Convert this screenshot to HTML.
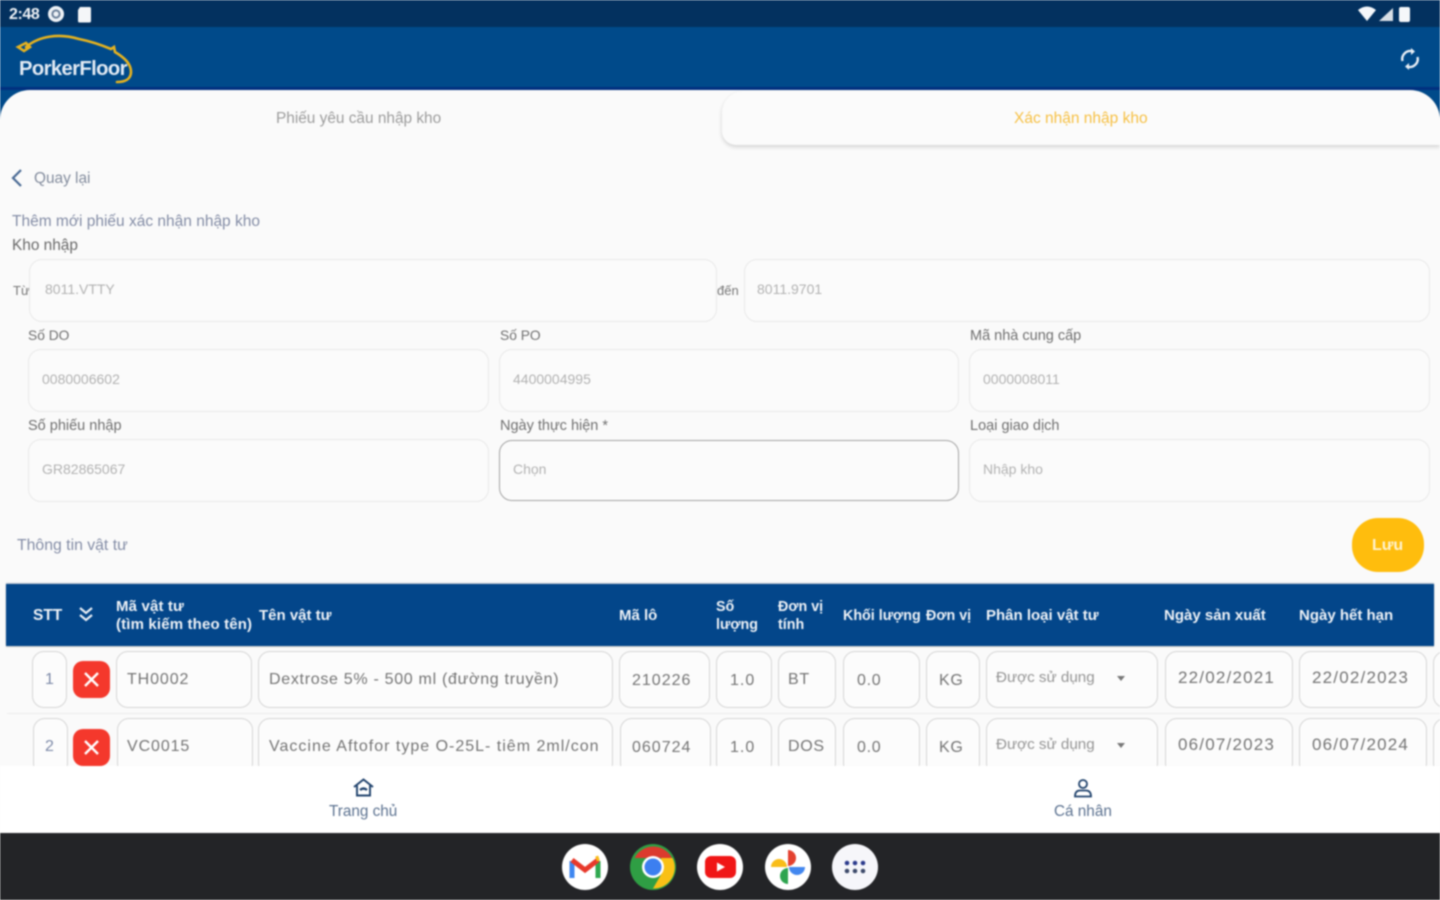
<!DOCTYPE html>
<html lang="vi"><head><meta charset="utf-8"><title>PorkerFloor</title>
<style>
*{box-sizing:border-box;margin:0;padding:0}
html,body{width:1440px;height:900px;overflow:hidden;background:#fafafa}
body{font-family:"Liberation Sans",sans-serif;position:relative}
#r{position:absolute;left:0;top:0;width:1440px;height:900px;overflow:hidden;filter:blur(.7px)}
.a{position:absolute;white-space:nowrap}
.t{position:absolute;white-space:nowrap;line-height:1}
.box{position:absolute;border:1.5px solid #e9e9e9;border-radius:13px;background:#fbfbfb}
.cell{position:absolute;border:1.5px solid #d6d6d6;border-radius:12px;background:#fcfcfc;height:57px;color:#747474;font-size:16px;letter-spacing:.7px;line-height:55px;white-space:nowrap;overflow:hidden}
.dt{font-size:17px;letter-spacing:1.2px;line-height:51px}
.lb{position:absolute;white-space:nowrap;font-size:14.5px;color:#707070;line-height:1}
.ph{position:absolute;white-space:nowrap;font-size:14px;color:#b2b2b2;line-height:1}
.th{position:absolute;white-space:nowrap;color:#eef2f7;font-size:15px;font-weight:bold;line-height:18px}
.x{position:absolute;left:73px;width:37px;height:37px;background:#f4382c;border-radius:10px}
.dock{position:absolute;top:844px;width:46px;height:46px;border-radius:50%;background:#fff}
</style></head><body><div id="r">

<!-- status + app bar -->
<div class="a" style="left:0;top:0;width:1440px;height:27px;background:#03315f"></div>
<div class="a" style="left:0;top:27px;width:1440px;height:110px;background:#004a8a"></div>
<div class="a" style="left:0;top:87px;width:1440px;height:3px;background:#01307f"></div>
<div class="t" style="left:9px;top:7px;font-size:16px;font-weight:bold;color:#eef2f6;letter-spacing:-.4px">2:48</div>
<svg class="a" style="left:47px;top:5px" width="18" height="18" viewBox="0 0 18 18"><circle cx="9" cy="9" r="8" fill="#eef2f6"/><circle cx="9" cy="9" r="3.6" fill="none" stroke="#6b8099" stroke-width="2"/></svg>
<svg class="a" style="left:75px;top:5px" width="18" height="18" viewBox="0 0 18 18"><path d="M5 2h9.500a1.500 1.500 0 0 1 1.500 1.500V16a1.500 1.500 0 0 1-1.500 1.500h-10A1.500 1.500 0 0 1 3 16V5z" fill="#f4f6f8"/></svg>
<svg class="a" style="left:1358px;top:5px" width="60" height="18" viewBox="0 0 60 18"><path d="M0 5q9-7 18 0l-9 11z" fill="#f5f7fa"/><path d="M35 3v13H21z" fill="#d9dfe6"/><rect x="41" y="2" width="11" height="15" rx="2" fill="#f5f7fa"/></svg>

<!-- logo -->
<svg class="a" style="left:14px;top:32px" width="122" height="54" viewBox="0 0 122 54"><path d="M4 15l8-4 4 4-6 4zM12 15C25 4 45 1 65 7c10 2 20 5 32 10l3-2 1 5c10 6 16 12 16 20 0 7-6 10-14 10" fill="none" stroke="#e5b21f" stroke-width="2.6" stroke-linecap="round"/></svg>
<div class="t" style="left:19px;top:59px;font-size:20.2px;font-weight:bold;color:#e3ebf4;letter-spacing:-.6px">PorkerFloor</div>

<!-- sync -->
<svg class="a" style="left:1398px;top:47px" width="24" height="24" viewBox="0 0 24 24" fill="none" stroke="#e8eef5" stroke-width="2.4"><path d="M4.500 14A8 8 0 0 1 15 4.500M19.500 10A8 8 0 0 1 9 19.500"/><path d="M13 1l4 3.500-4 3.500z" fill="#e8eef5" stroke="none"/><path d="M11 23l-4-3.500 4-3.500z" fill="#e8eef5" stroke="none"/></svg>

<!-- sheet -->
<div class="a" style="left:0;top:90px;width:1440px;height:690px;background:#fafafa;border-radius:30px 30px 0 0"></div>
<div class="t" style="left:276px;top:111px;font-size:15.4px;color:#9c9c9c">Phiếu yêu cầu nhập kho</div>
<div class="a" style="left:722px;top:91px;width:718px;height:54px;background:#fbfbfb;border-radius:22px 30px 0 14px;box-shadow:0 2px 4px rgba(0,0,0,.16)"></div>
<div class="t" style="left:1014px;top:111px;font-size:15.5px;color:#f6c044">Xác nhận nhập kho</div>

<svg class="a" style="left:9px;top:168px" width="16" height="20" viewBox="0 0 16 20" fill="none" stroke="#4a6a94" stroke-width="2.200"><path d="M12 2L4 10l8 8"/></svg>
<div class="t" style="left:34px;top:171px;font-size:15.4px;color:#848d9e">Quay lại</div>
<div class="t" style="left:12px;top:214px;font-size:15.5px;color:#848da6">Thêm mới phiếu xác nhận nhập kho</div>
<div class="t" style="left:12px;top:238px;font-size:15.4px;color:#6a6a6a">Kho nhập</div>

<!-- form -->
<div class="t" style="left:13px;top:284px;font-size:13px;color:#777">Từ</div>
<div class="box" style="left:29px;top:259px;width:688px;height:63px"></div>
<div class="ph" style="left:45px;top:282px">8011.VTTY</div>
<div class="t" style="left:717px;top:284px;font-size:13px;color:#777">đến</div>
<div class="box" style="left:744px;top:259px;width:686px;height:63px"></div>
<div class="ph" style="left:757px;top:282px">8011.9701</div>

<div class="lb" style="left:28px;top:329px;font-size:13.8px">Số DO</div>
<div class="lb" style="left:500px;top:329px;font-size:13.8px">Số PO</div>
<div class="lb" style="left:970px;top:329px">Mã nhà cung cấp</div>
<div class="box" style="left:28px;top:349px;width:461px;height:63px"></div>
<div class="box" style="left:499px;top:349px;width:460px;height:63px"></div>
<div class="box" style="left:969px;top:349px;width:461px;height:63px"></div>
<div class="ph" style="left:42px;top:372px">0080006602</div>
<div class="ph" style="left:513px;top:372px">4400004995</div>
<div class="ph" style="left:983px;top:372px">0000008011</div>

<div class="lb" style="left:28px;top:419px">Số phiếu nhập</div>
<div class="lb" style="left:500px;top:419px">Ngày thực hiện *</div>
<div class="lb" style="left:970px;top:419px">Loại giao dịch</div>
<div class="box" style="left:28px;top:439px;width:461px;height:63px"></div>
<div class="box" style="left:499px;top:440px;width:460px;height:61px;border:1.500px solid #a4a4a4"></div>
<div class="box" style="left:969px;top:439px;width:461px;height:63px"></div>
<div class="ph" style="left:42px;top:462px">GR82865067</div>
<div class="ph" style="left:513px;top:462px">Chọn</div>
<div class="ph" style="left:983px;top:462px">Nhập kho</div>

<div class="t" style="left:17px;top:538px;font-size:15.8px;color:#848da6">Thông tin vật tư</div>
<div class="a" style="left:1352px;top:518px;width:72px;height:54px;background:#ffbd0d;border-radius:26px"></div>
<div class="t" style="left:1372px;top:538px;font-size:16px;font-weight:bold;color:#fff3d0">Lưu</div>

<!-- table header -->
<div class="a" style="left:6px;top:584px;width:1428px;height:62px;background:#03468a;box-shadow:0 -1px 1px #aeb9c9,0 1px 1px #c4c4c4"></div>
<div class="th" style="left:33px;top:607px;font-size:15.5px">STT</div>
<svg class="a" style="left:78px;top:606px" width="16" height="17" viewBox="0 0 16 17" fill="none" stroke="#e8eef5" stroke-width="2.200"><path d="M2 2l6 5 6-5M2 9l6 5 6-5"/></svg>
<div class="th" style="left:116px;top:598px;letter-spacing:.15px">Mã vật tư<br>(tìm kiếm theo tên)</div>
<div class="th" style="left:259px;top:607px">Tên vật tư</div>
<div class="th" style="left:619px;top:607px">Mã lô</div>
<div class="th" style="left:716px;top:598px;font-size:14.3px">Số<br>lượng</div>
<div class="th" style="left:778px;top:598px;font-size:14.3px">Đơn vị<br>tính</div>
<div class="th" style="left:843px;top:607px;font-size:14.3px">Khối lượng</div>
<div class="th" style="left:926px;top:607px;font-size:14.3px">Đơn vị</div>
<div class="th" style="left:986px;top:607px">Phân loại vật tư</div>
<div class="th" style="left:1164px;top:607px">Ngày sản xuất</div>
<div class="th" style="left:1299px;top:607px">Ngày hết hạn</div>

<!-- row 1 -->
<div class="cell" style="left:32px;top:651px;width:35px;padding-left:12px;color:#7d8aa8">1</div>
<div class="x" style="top:661px"><svg width="37" height="37" fill="none" stroke="#fff" stroke-width="2.400"><path d="M12 12l13 13M25 12L12 25"/></svg></div>
<div class="cell" style="left:116px;top:651px;width:136px;padding-left:10px;letter-spacing:.9px">TH0002</div>
<div class="cell" style="left:258px;top:651px;width:355px;padding-left:10px">Dextrose 5% - 500 ml (đường truyền)</div>
<div class="cell" style="left:619px;top:651px;width:91px;padding-left:12px;line-height:58px;letter-spacing:1px">210226</div>
<div class="cell" style="left:716px;top:651px;width:56px;padding-left:13px;line-height:58px;letter-spacing:1px">1.0</div>
<div class="cell" style="left:778px;top:651px;width:58px;padding-left:9px">BT</div>
<div class="cell" style="left:843px;top:651px;width:77px;padding-left:13px;line-height:58px">0.0</div>
<div class="cell" style="left:926px;top:651px;width:54px;padding-left:12px;line-height:58px">KG</div>
<div class="cell" style="left:986px;top:651px;width:172px;padding-left:9px;font-size:15.2px;line-height:52px;letter-spacing:0;color:#959595">Được sử dụng</div>
<div class="a" style="left:1117px;top:676px;border:4.500px solid transparent;border-top:5px solid #777;border-bottom:0"></div>
<div class="cell dt" style="left:1165px;top:651px;width:128px;padding-left:12px">22/02/2021</div>
<div class="cell dt" style="left:1299px;top:651px;width:128px;padding-left:12px">22/02/2023</div>
<div class="cell" style="left:1433px;top:651px;width:30px"></div>
<div class="a" style="left:7px;top:713px;width:1433px;height:1px;background:#ececec"></div>

<!-- row 2 -->
<div class="cell" style="left:33px;top:718px;width:35px;padding-left:11px;color:#7d8aa8">2</div>
<div class="x" style="top:729px"><svg width="37" height="37" fill="none" stroke="#fff" stroke-width="2.400"><path d="M12 12l13 13M25 12L12 25"/></svg></div>
<div class="cell" style="left:117px;top:718px;width:136px;padding-left:9px;letter-spacing:.9px">VC0015</div>
<div class="cell" style="left:258px;top:718px;width:355px;padding-left:10px;letter-spacing:1px">Vaccine Aftofor type O-25L- tiêm 2ml/con</div>
<div class="cell" style="left:620px;top:718px;width:91px;padding-left:11px;line-height:58px;letter-spacing:1px">060724</div>
<div class="cell" style="left:716px;top:718px;width:56px;padding-left:13px;line-height:58px;letter-spacing:1px">1.0</div>
<div class="cell" style="left:778px;top:718px;width:58px;padding-left:9px">DOS</div>
<div class="cell" style="left:843px;top:718px;width:77px;padding-left:13px;line-height:58px">0.0</div>
<div class="cell" style="left:926px;top:718px;width:54px;padding-left:12px;line-height:58px">KG</div>
<div class="cell" style="left:986px;top:718px;width:172px;padding-left:9px;font-size:15.2px;line-height:52px;letter-spacing:0;color:#959595">Được sử dụng</div>
<div class="a" style="left:1117px;top:743px;border:4.500px solid transparent;border-top:5px solid #777;border-bottom:0"></div>
<div class="cell dt" style="left:1165px;top:718px;width:128px;padding-left:12px">06/07/2023</div>
<div class="cell dt" style="left:1299px;top:718px;width:128px;padding-left:12px">06/07/2024</div>
<div class="cell" style="left:1433px;top:718px;width:30px"></div>

<!-- bottom nav -->
<div class="a" style="left:0;top:766px;width:1440px;height:67px;background:#fff"></div>
<svg class="a" style="left:353px;top:778px" width="21" height="19" viewBox="0 0 21 19" fill="none" stroke="#21436d" stroke-width="1.900"><path d="M1 9l9.500-7.500L20 9M4 7.500V17.500h13V7.500"/><path d="M7 12q3.500-3 7 0" stroke-width="2.400"/></svg>
<div class="t" style="left:329px;top:804px;font-size:15.3px;color:#5d7391">Trang chủ</div>
<svg class="a" style="left:1073px;top:778px" width="20" height="20" viewBox="0 0 20 20" fill="none" stroke="#21436d" stroke-width="1.800"><circle cx="10" cy="6" r="4"/><path d="M2 18.500q0-6 5-6h6q5 0 5 6z"/></svg>
<div class="t" style="left:1054px;top:804px;font-size:15.3px;color:#5d7391">Cá nhân</div>

<!-- dock -->
<div class="a" style="left:0;top:833px;width:1440px;height:67px;background:#232427"></div>
<div class="dock" style="left:562px"><svg width="46" height="46" viewBox="0 0 46 46" fill="none" stroke-width="5"><path d="M10 34V17" stroke="#3f87f0"/><path d="M36 34V17" stroke="#2fa84f"/><path d="M10 16l13 10 13-10" stroke="#e8392b"/><path d="M34 15l3 -1" stroke="#f9bb16"/></svg></div>
<div class="dock" style="left:630px;background:#2f9e44"><svg width="46" height="46" viewBox="0 0 46 46"><path d="M4.600 14A21 21 0 0 1 42 14H23z" fill="#db3a2e"/><path d="M42.500 14A21 21 0 0 1 23 44.500L32 29l-1-15z" fill="#f9c016"/><circle cx="23" cy="23" r="11" fill="#fff"/><circle cx="23" cy="23" r="8.500" fill="#3c7ff0"/></svg></div>
<div class="dock" style="left:697px"><svg width="46" height="46" viewBox="0 0 46 46"><rect x="8" y="12" width="31" height="22" rx="6" fill="#f01616"/><path d="M20 18.500l8 4.500-8 4.500z" fill="#fff"/></svg></div>
<div class="dock" style="left:765px"><svg width="46" height="46" viewBox="0 0 46 46"><path d="M23 22V6a8 8 0 0 1 0 16z" fill="#e4412f"/><path d="M24 23h16a8 8 0 0 1-16 0z" fill="#4387ef"/><path d="M23 24v16a8 8 0 0 1 0-16z" fill="#2ea44f"/><path d="M22 23H6a8 8 0 0 1 16 0z" fill="#f9bd18"/></svg></div>
<div class="dock" style="left:832px;background:#f6f6fa"><svg width="46" height="46" viewBox="0 0 46 46"><g fill="#2b3a8c"><circle cx="15" cy="19" r="2.300"/><circle cx="23" cy="19" r="2.300"/><circle cx="31" cy="19" r="2.300"/></g><g fill="#3d4a6a"><circle cx="15" cy="27" r="2.300"/><circle cx="23" cy="27" r="2.300"/><circle cx="31" cy="27" r="2.300"/></g></svg></div>

</div></body></html>
